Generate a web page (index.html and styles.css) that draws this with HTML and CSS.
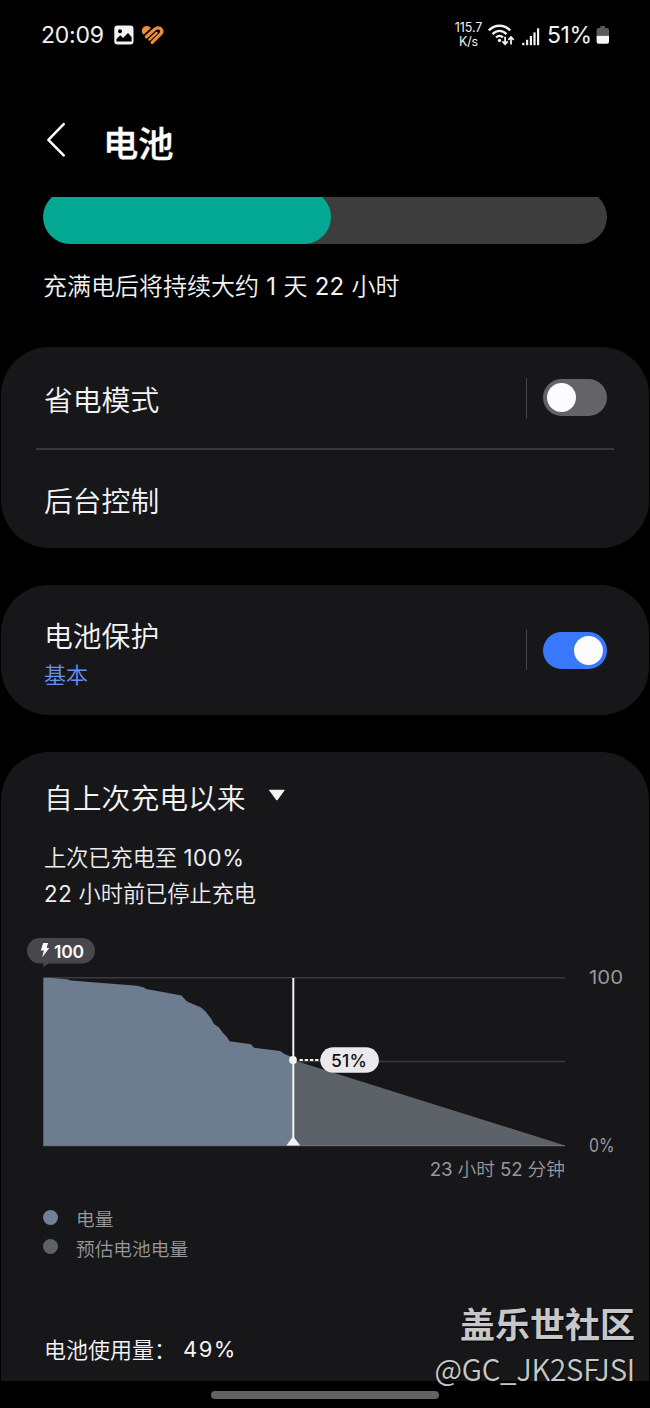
FILE: index.html
```html
<!DOCTYPE html>
<html lang="zh-CN">
<head>
<meta charset="utf-8">
<title>电池</title>
<link rel="stylesheet" href="styles.css">
</head>
<body>
<div class="screen">
  <div class="status">
    <span class="clock">20:09</span>
    <svg class="st-photo" width="20" height="20" viewBox="0 0 20 20"><rect x="0.3" y="0.5" width="19.2" height="19" rx="3.2" fill="#f2f2f2"/><circle cx="6" cy="6.3" r="2" fill="#000"/><path d="M2.5 16.5V14l3.8-3.7 2.7 2.6 5-5 3.6 4v4.6z" fill="#000"/></svg>
    <svg class="st-heart" width="24" height="20" viewBox="0 0 24 20" fill="none" stroke="#ee8c38" stroke-linecap="round" stroke-linejoin="round"><path d="M1.5 8.6C-.4 4.6 2 1 5.4.9 7.4.8 9 1.6 10 2.9L2.8 9.4q-.8.6-1.3-.8z" fill="#ee8c38" stroke="none"/><path d="M5.4 11.8L13.5 4.4C15.6 2.4 18.8 2.2 20.2 4.3 21.3 6 20.9 7.6 19.7 8.9L11.2 17.4" stroke-width="3.3"/><path d="M8.4 14.6L15.6 7.9" stroke-width="2.4"/></svg>
    <span class="speed"><span>115.7</span><span>K/s</span></span>
    <svg class="st-wifi" width="27" height="22" viewBox="0 0 27 22" fill="none" stroke="#f2f2f2" stroke-width="2.3"><path d="M.8 6.4C7 .2 16 .2 22.2 6.4M4.5 10.1c4.2-4.3 9.8-4.3 14 0M8 13.5c2-2.1 5-2.1 7 0"/><circle cx="11.5" cy="16.4" r="1.7" fill="#f2f2f2" stroke="none"/><path d="M17.1 12.7v7M14.4 17.4l2.7 2.8 2.7-2.8M23 20.4v-7M20.3 15.8l2.7-2.8 2.7 2.8" stroke-width="1.8"/></svg>
    <svg class="st-signal" width="18" height="18" viewBox="0 0 18 18" fill="#f2f2f2"><rect x="0.2" y="14.8" width="2.2" height="2.4"/><rect x="4" y="11.8" width="2.2" height="5.4"/><rect x="7.8" y="8" width="2.2" height="9.2"/><rect x="11.4" y="4.4" width="2.2" height="12.8"/><rect x="15" y="0.3" width="2.2" height="16.9"/></svg>
    <span class="percent">51%</span>
    <svg class="st-batt" width="14" height="20" viewBox="0 0 14 20"><path d="M4.2 1h4.9v2.1H11q2 0 2 2V10.8H.6V5.1q0-2 2-2h1.6z" fill="#5a5a5a"/><path d="M.6 10.8H13v6q0 2-2 2H2.6q-2 0-2-2z" fill="#f6f6f6"/></svg>
  </div>
  <header class="header">
    <svg class="back" width="20" height="36" viewBox="0 0 20 36"><path d="M17.7 2.2L2.4 17.9 17.7 33.4" fill="none" stroke="#fff" stroke-width="2.6" stroke-linecap="round" stroke-linejoin="round"/></svg>
    <h1 class="title">电池</h1>
  </header>
  <div class="level"><div class="level-track"><div class="level-fill"></div></div></div>
  <p class="remaining">充满电后将持续大约 <b>1</b> 天 <b>22</b> 小时</p>

  <section class="card modes">
    <div class="row"><span class="label">省电模式</span><i class="sep"></i><span class="switch"><i class="knob"></i></span></div>
    <div class="divider"></div>
    <div class="row second"><span class="label">后台控制</span></div>
  </section>

  <section class="card protect">
    <div class="stack"><span class="label">电池保护</span><span class="sub">基本</span></div>
    <i class="sep"></i><span class="switch on"><i class="knob"></i></span>
  </section>

  <section class="card usage">
    <div class="range"><span class="label">自上次充电以来</span><svg width="18" height="12" viewBox="0 0 18 12"><path d="M1.6.7h14.5q1 0 .4.8L9.8 10.8q-.9 1.1-1.8 0L1.2 1.5Q.6.7 1.6.7z" fill="#f2f2f2"/></svg></div>
    <p class="info">上次已充电至 <b>100%</b></p>
    <p class="info"><b>22</b> 小时前已停止充电</p>
    <svg class="chart" width="650" height="220" viewBox="0 930 650 220">
      <path d="M39.7 938H82.3a12.7 12.7 0 0 1 0 25.4H48.5L43.5 967V963.4H39.7a12.7 12.7 0 0 1 0-25.4z" fill="#47474c"/>
      <path d="M43.2 943h4.9l-1.5 5.1h2.7l-7.1 9.2 1.7-6.8h-3.1z" fill="#fff"/>
      <text x="54" y="957.5" class="tag-light" textLength="30">100</text>
      <path d="M43 977.7H565M43 1061.5H565" stroke="#3b3b3f" stroke-width="1.6"/>
      <path d="M43.3 978H52L67 979.2 71 980.4 137 985.7 144 987.4 146 989 160 991.5 181.5 995.5 187 1001.5 201 1007.5 205.5 1011.5 211 1018.5 214 1024 219 1027.5 223 1033 227 1037 229.5 1041.3 251 1044.3 254 1047.8 280 1051 284 1053.8 293 1057.5V1145.5H43.3z" fill="#6e7c8f"/>
      <path d="M293 1060L565 1145.5H293z" fill="#5d6269"/>
      <path d="M43 1145.7H565" stroke="#777b82" stroke-width="1"/>
      <path d="M293.3 978V1145" stroke="#f2f2f4" stroke-width="2"/>
      <circle cx="293" cy="1060" r="3.9" fill="#f2f2f4"/>
      <path d="M293.2 1136.2L300.2 1145.6H286.4z" fill="#f2f2f4"/>
      <path d="M299.5 1060H321" stroke="#f2f2f4" stroke-width="2" stroke-dasharray="3.4 1.8"/>
      <rect x="320.3" y="1047.2" width="58.6" height="25.6" rx="12.8" fill="#e9e9ee"/>
      <text x="331" y="1066.7" class="tag-dark" textLength="36">51%</text>
      <text x="589" y="984" class="axis" textLength="34" lengthAdjust="spacingAndGlyphs">100</text>
      <text x="589" y="1151.5" class="axis" textLength="25.5" lengthAdjust="spacingAndGlyphs">0%</text>
    </svg>
    <p class="ahead"><b>23</b> 小时 <b>52</b> 分钟</p>
    <ul class="legend">
      <li><i class="dot now"></i>电量</li>
      <li><i class="dot"></i>预估电池电量</li>
    </ul>
    <p class="total"><span>电池使用量：</span><b>49%</b></p>
  </section>
  <footer class="nav"><i class="pill"></i></footer>
  <div class="watermark"><strong>盖乐世社区</strong><span>@GC_JK2SFJSI</span></div>
</div>
</body>
</html>
```

FILE: styles.css
```css
* { box-sizing: border-box; margin: 0; padding: 0; }
body { background: #000; color: #f4f4f6; font-family: "Noto Sans CJK SC", sans-serif; font-weight: 350; }
b { font-family: Inter, sans-serif; font-weight: 400; line-height: 1; }
i { display: block; flex: none; }
.screen { position: relative; width: 650px; height: 1408px; overflow: hidden; display: flex; flex-direction: column; }
.screen > * { flex: none; }

.status { height: 70px; display: flex; align-items: center; padding: 0 40px 0 41px; font-family: Inter, sans-serif; font-weight: 400; color: #f2f2f2; }
.status svg { flex: none; }
.clock { width: 73px; font-size: 23px; letter-spacing: -0.25px; line-height: 30px; }
.st-heart { margin-left: 7px; }
.speed { margin-left: auto; width: 29px; display: flex; flex-direction: column; align-items: center; font-size: 12.5px; line-height: 14px; letter-spacing: -0.1px; white-space: nowrap; }
.st-wifi { margin-left: 5px; }
.st-signal { margin: 4px 0 0 7px; }
.percent { margin-left: 7px; width: 46px; font-size: 23px; letter-spacing: -0.4px; line-height: 30px; white-space: nowrap; }
.st-batt { margin-left: 3px; }

.header { height: 127px; display: flex; align-items: flex-start; padding: 0 46px; }
.back { margin-top: 52px; }
.title { margin: 46px 0 0 37px; font-size: 35.3px; line-height: 51px; font-weight: 500; -webkit-text-stroke: 0.4px #fff; color: #fff; }
.level { height: 47px; margin: 0 43px; overflow: hidden; display: flex; align-items: flex-end; }
.level-track { flex: none; width: 564px; height: 54px; border-radius: 27px; background: #3d3d3d; overflow: hidden; }
.level-fill { width: 288px; height: 54px; border-radius: 27px; background: #04a993; }
.remaining { height: 103px; padding: 23px 0 0 43px; font-size: 24px; line-height: 36px; white-space: pre; word-spacing: 2px; }

.card { margin: 0 1px; background: #17171a; border-radius: 48px; }
.label { font-size: 28.8px; line-height: 42px; }
.sep { width: 1px; height: 40px; background: #47474b; }
.switch { flex: none; width: 64px; height: 37px; margin-left: 16px; padding: 4px; border-radius: 19px; background: #636368; }
.switch.on { background: #3a78fb; padding-left: 31px; }
.knob { width: 29px; height: 29px; border-radius: 50%; background: #fcfcff; }
.modes { height: 201px; }
.row { height: 101px; display: flex; align-items: center; justify-content: flex-end; padding: 0 42px 0 43px; }
.row .label { margin: 3px auto 0 0; }
.row.second .label { margin-top: 1px; }
.divider { height: 2px; margin: 0 35px; background: #38383c; }
.row.second { height: 98px; }

.protect { height: 130px; margin-top: 37px; display: flex; align-items: center; padding: 0 42px 0 43px; }
.stack { margin: 4px auto 0 0; display: flex; flex-direction: column; }
.sub { font-size: 22px; line-height: 36px; color: #6592f4; }
.stack .sub { margin-top: -1px; }

.usage { height: 629px; margin-top: 37px; border-radius: 48px 48px 0 0; }
.range { display: flex; align-items: center; padding: 24px 0 0 43px; }
.range svg { margin: -5px 0 0 22px; }
.info { height: 36px; padding-left: 43px; font-size: 22.2px; line-height: 36px; white-space: pre; word-spacing: 1.3px; color: #ededf0; }
.info b { letter-spacing: 0.6px; }
.range + .info { margin-top: 20px; }
.chart { display: block; margin: 20px 0 0 -1px; overflow: visible; }
.chart text { font-family: Inter, sans-serif; }
.tag-light { font-size: 17.5px; font-weight: 600; fill: #fff; }
.tag-dark { font-size: 17.5px; font-weight: 500; fill: #111; }
.axis { font-size: 19px; font-weight: 400; fill: #98989c; }
.ahead { height: 28px; margin: 4px 84px 0 0; text-align: right; font-size: 18.7px; line-height: 28px; color: #98989c; white-space: pre; word-spacing: 0.8px; }
.legend { list-style: none; margin: 21px 0 0 42px; color: #98989c; font-size: 18.7px; }
.legend li { height: 29.5px; display: flex; align-items: center; gap: 18px; line-height: 29px; }
.dot { width: 15px; height: 15px; margin-top: -1px; border-radius: 50%; background: #5d6269; }
.dot.now { background: #718096; }
.total { display: flex; align-items: center; margin: 69px 0 0 43px; font-size: 22px; line-height: 34px; }
.total b { margin-left: 7px; padding-bottom: -2px; letter-spacing: 1.4px; position: relative; top: 1px; }

.nav { height: 27px; display: flex; justify-content: center; padding-top: 10px; background: #000; }
.pill { width: 228px; height: 8px; border-radius: 4px; background: #626262; }
.watermark { position: absolute; right: 15px; top: 1297px; display: flex; flex-direction: column; align-items: flex-end; color: #c7c7c9; text-shadow: 1px 1px 1px #000; }
.watermark strong { font-size: 35px; line-height: 52px; font-weight: 700; }
.watermark span { font-size: 29.5px; line-height: 40px; letter-spacing: -0.3px; margin-top: -1px; }
```
